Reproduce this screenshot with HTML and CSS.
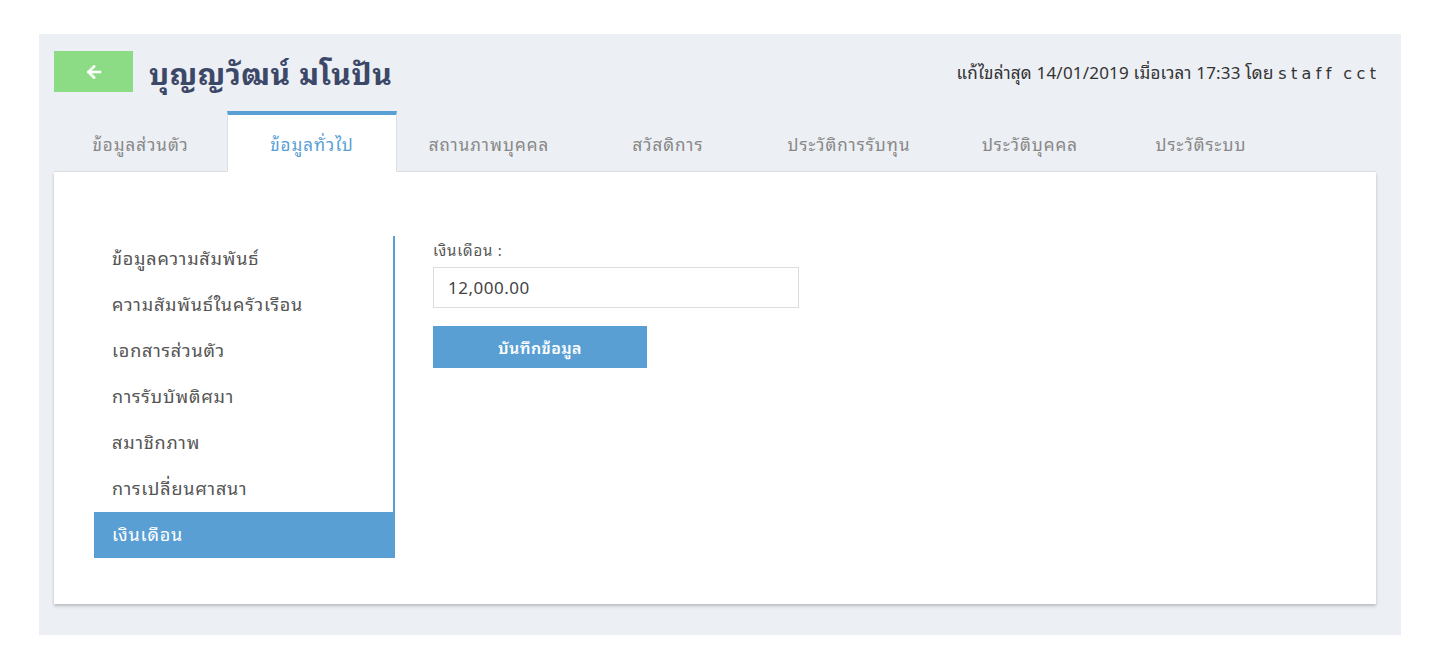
FILE: index.html
```html
<!DOCTYPE html>
<html lang="th">
<head>
<meta charset="utf-8">
<title>ข้อมูลทั่วไป</title>
<link rel="stylesheet" href="styles.css">
</head>
<body>
<div class="page">
  <header class="header">
    <a class="back" href="#" aria-label="กลับ">
      <svg width="16" height="14" viewBox="0 0 16 14"><path d="M8 1.5 2.5 7 8 12.5M2.5 7H14" fill="none" stroke="#fff" stroke-width="2.6" stroke-linecap="square"/></svg>
    </a>
    <h1 class="title">บุญญวัฒน์ มโนปัน</h1>
    <div class="updated">แก้ไขล่าสุด 14/01/2019 เมื่อเวลา 17:33 โดย <span class="user">staff cct</span></div>
  </header>
  <nav class="tabs">
    <div class="tab">ข้อมูลส่วนตัว</div>
    <div class="tab active">ข้อมูลทั่วไป</div>
    <div class="tab">สถานภาพบุคคล</div>
    <div class="tab">สวัสดิการ</div>
    <div class="tab">ประวัติการรับทุน</div>
    <div class="tab">ประวัติบุคคล</div>
    <div class="tab">ประวัติระบบ</div>
  </nav>
  <section class="card">
    <ul class="side">
      <li class="side-item">ข้อมูลความสัมพันธ์</li>
      <li class="side-item">ความสัมพันธ์ในครัวเรือน</li>
      <li class="side-item">เอกสารส่วนตัว</li>
      <li class="side-item">การรับบัพติศมา</li>
      <li class="side-item">สมาชิกภาพ</li>
      <li class="side-item">การเปลี่ยนศาสนา</li>
      <li class="side-item active">เงินเดือน</li>
    </ul>
    <form class="form">
      <label class="label" for="salary">เงินเดือน :</label>
      <input class="input" id="salary" type="text" value="12,000.00">
      <button class="save" type="button">บันทึกข้อมูล</button>
    </form>
  </section>
</div>
</body>
</html>
```
FILE: styles.css
```css
* { box-sizing: border-box; }
html, body { margin: 0; padding: 0; background: #fff; }
body {
  font-family: "Noto Sans Thai Looped", "Noto Sans Thai", "Noto Sans", "Liberation Sans", sans-serif;
  color: #444;
}
.page {
  margin: 34px 0 0 39px;
  width: 1362px;
  height: 601px;
  background: #eceff4;
  padding: 17px 25px 0 15px;
}
.header {
  display: flex;
  align-items: center;
  height: 41px;
}
.back {
  width: 79px;
  height: 41px;
  background: #8cdc85;
  display: flex;
  align-items: center;
  justify-content: center;
}
.title {
  margin: 0 0 0 16px;
  font-size: 30px;
  font-weight: 700;
  letter-spacing: 0.6px;
  color: #3c4868;
  line-height: 41px;
  white-space: nowrap;
}
.updated {
  margin-left: auto;
  font-size: 17px;
  letter-spacing: 0.2px;
  color: #333;
  white-space: nowrap;
}
.user {
  font-family: "DejaVu Sans", "Noto Sans", sans-serif;
  font-size: 16px;
  letter-spacing: 4.4px;
  word-spacing: -2px;
  margin-right: -4.4px;
}
.tabs {
  display: flex;
  margin-top: 19px;
  height: 61px;
  border-bottom: 1px solid #dde0e5;
}
.tab {
  width: 174px;
  display: flex;
  align-items: center;
  justify-content: center;
  font-size: 17px;
  letter-spacing: 1px;
  color: #888;
  border-top: 4px solid transparent;
  white-space: nowrap;
}
.tab:nth-child(1) { width: 173px; }
.tab:nth-child(3) { width: 184px; }
.tab:nth-child(5) { width: 188px; }
.tab:nth-child(7) { width: 168px; }
.tab.active {
  width: 170px;
  background: #fff;
  color: #5a9fd4;
  border-top-color: #5a9fd4;
  border-left: 1px solid #dde0e5;
  border-right: 1px solid #dde0e5;
  margin-bottom: -1px;
}
.card {
  width: 1322px;
  height: 432px;
  background: #fff;
  box-shadow: 0 2px 3px rgba(0, 0, 0, 0.22);
  display: flex;
  padding: 64px 0 0 40px;
}
.side {
  list-style: none;
  margin: 0;
  padding: 0;
  width: 301px;
  height: 322px;
  border-right: 2px solid #5a9fd4;
}
.side-item {
  height: 46px;
  display: flex;
  align-items: center;
  padding: 0 0 4px 18px;
  font-size: 18px;
  letter-spacing: 0.8px;
  color: #555;
}
.side-item.active {
  background: #5a9fd4;
  color: #fff;
  margin-right: -2px;
}
.form {
  margin-left: 38px;
  display: flex;
  flex-direction: column;
  align-items: flex-start;
  padding-top: 2px;
}
.label {
  font-size: 15px;
  letter-spacing: 0.8px;
  color: #555;
  height: 29px;
  line-height: 22px;
}
.input {
  width: 366px;
  height: 41px;
  border: 1px solid #ddd;
  padding: 0 14px 2px;
  font-family: inherit;
  font-size: 17px;
  letter-spacing: 0.5px;
  color: #444;
  outline: none;
}
.save {
  margin-top: 18px;
  width: 214px;
  height: 42px;
  background: #5a9fd4;
  border: 0;
  color: #fff;
  font-family: inherit;
  font-size: 16px;
  letter-spacing: 0.4px;
  font-weight: 600;
}
```
